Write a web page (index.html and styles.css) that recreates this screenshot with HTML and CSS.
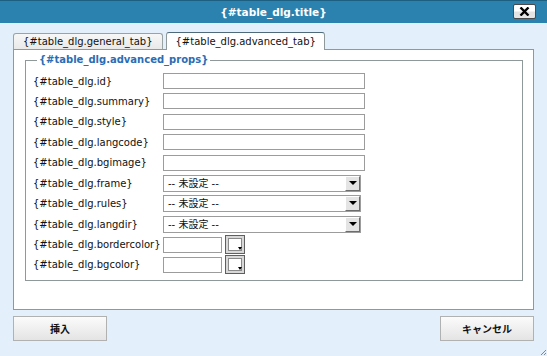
FILE: index.html
```html
<!DOCTYPE html>
<html lang="ja">
<head>
    <meta charset="UTF-8">
    <title>{#table_dlg.title}</title>
    <link rel="stylesheet" href="styles.css">
</head>
<body>
    <div class="dialog">
        <div class="titlebar">
            <span class="title">{#table_dlg.title}</span>
            <button class="close" type="button">
                <svg width="11" height="9" viewBox="0 0 11 9">
                    <path d="M1.5 0.5 L9.5 8.5 M9.5 0.5 L1.5 8.5" stroke="#000" stroke-width="2.4"/>
                </svg>
            </button>
        </div>
        <div class="tabs">
            <span class="tab">{#table_dlg.general_tab}</span>
            <span class="tab current">{#table_dlg.advanced_tab}</span>
        </div>
        <div class="panel">
            <fieldset class="props">
                <legend>{#table_dlg.advanced_props}</legend>
                <div class="form">
                    <label>{#table_dlg.id}</label>
                    <input type="text" class="text">
                    <label>{#table_dlg.summary}</label>
                    <input type="text" class="text">
                    <label>{#table_dlg.style}</label>
                    <input type="text" class="text">
                    <label>{#table_dlg.langcode}</label>
                    <input type="text" class="text">
                    <label>{#table_dlg.bgimage}</label>
                    <input type="text" class="text">
                    <label>{#table_dlg.frame}</label>
                    <div class="select"><select><option>-- 未設定 --</option></select><span class="arrow"></span></div>
                    <label>{#table_dlg.rules}</label>
                    <div class="select"><select><option>-- 未設定 --</option></select><span class="arrow"></span></div>
                    <label>{#table_dlg.langdir}</label>
                    <div class="select"><select><option>-- 未設定 --</option></select><span class="arrow"></span></div>
                    <label>{#table_dlg.bordercolor}</label>
                    <div class="color"><input type="text" class="text short"><span class="picker"><span class="swatch"></span></span></div>
                    <label>{#table_dlg.bgcolor}</label>
                    <div class="color"><input type="text" class="text short"><span class="picker"><span class="swatch"></span></span></div>
                </div>
            </fieldset>
        </div>
        <div class="buttons">
            <button type="button" class="btn">挿入</button>
            <button type="button" class="btn">キャンセル</button>
        </div>
        <svg class="grip" width="7" height="7" viewBox="0 0 7 7">
            <path d="M6 1 L1 6 M6 4 L4 6" stroke="#7a8a99" stroke-width="1"/>
        </svg>
    </div>
</body>
</html>
```

FILE: styles.css
```css
*{
    margin: 0;
    padding: 0;
    box-sizing: border-box;
}
body{
    width: 547px;
    height: 356px;
    overflow: hidden;
    font-family: "DejaVu Sans", "Noto Sans CJK JP", sans-serif;
    font-size: 10px;
    color: #111;
}
.dialog{
    position: relative;
    width: 547px;
    height: 356px;
    background: #e3f0fb;
}
.titlebar{
    height: 23px;
    background: #2b82ae;
    border-top: 1px solid #1d5f80;
    display: flex;
    align-items: center;
    justify-content: center;
    position: relative;
}
.title{
    color: #fff;
    font-weight: bold;
    font-size: 10.5px;
}
.close{
    position: absolute;
    right: 11px;
    top: 3px;
    width: 23px;
    height: 15px;
    border: 1px solid #4a4a4a;
    border-radius: 2px;
    background: linear-gradient(#ffffff, #ffffff 45%, #e2e2e2 55%, #e6e6e6);
    display: flex;
    align-items: center;
    justify-content: center;
}
.tabs{
    display: flex;
    align-items: flex-end;
    gap: 3px;
    margin: 8px 0 0 13px;
    height: 18px;
}
.tab{
    height: 16px;
    padding: 0 9px;
    line-height: 15px;
    border: 1px solid #9aa3a4;
    border-bottom: none;
    border-radius: 3px 3px 0 0;
    background: linear-gradient(#f7f7f7, #e9e9e9);
}
.tab.current{
    height: 18px;
    line-height: 17px;
    padding: 0 8px 0 9px;
    background: #fff;
    border-color: #8f999a;
    border-top-color: #4f6a7a;
    position: relative;
    top: 1px;
}
.panel{
    margin-left: 13px;
    width: 521px;
    height: 261px;
    background: #fff;
    border: 1px solid #8f999a;
    padding: 4px 10px 0 11px;
}
.props{
    border: 1px solid #8f999a;
    padding: 7px 0 7px 7px;
}
.props legend{
    color: #2b6db5;
    font-weight: bold;
    line-height: 12px;
    padding: 0 2px;
    margin-left: 4px;
}
.form{
    display: grid;
    grid-template-columns: 130px auto;
    grid-auto-rows: 16px;
    row-gap: 4.45px;
    align-items: center;
}
.form label{
    white-space: nowrap;
}
.text{
    width: 202px;
    height: 16px;
    border: 1px solid #9c9c9c;
    background: #fff;
    font: inherit;
}
.text.short{
    width: 59px;
}
.select{
    position: relative;
    width: 198px;
    height: 17px;
}
.select select{
    appearance: none;
    width: 100%;
    height: 17px;
    border: 1px solid #9c9c9c;
    background: #fff;
    font: inherit;
    color: #111;
    padding-left: 4px;
    border-radius: 0;
}
.arrow{
    position: absolute;
    right: 1px;
    top: 1px;
    width: 15px;
    height: 15px;
    background: #e4e4e4;
    border-top: 1px solid #fff;
    border-left: 1px solid #fff;
    border-right: 1px solid #6d6d6d;
    border-bottom: 1px solid #6d6d6d;
}
.arrow::after{
    content: "";
    position: absolute;
    left: 3px;
    top: 4px;
    border-left: 4px solid transparent;
    border-right: 4px solid transparent;
    border-top: 4px solid #000;
}
.color{
    display: flex;
    align-items: center;
    gap: 3px;
    height: 16px;
}
.picker{
    position: relative;
    width: 20px;
    height: 19px;
    border: 1px solid #5f5f5f;
    background: #d8d8d8;
    padding: 2px;
}
.swatch{
    display: block;
    width: 14px;
    height: 13px;
    background: #fff;
    border: 1px solid #8a8a8a;
}
.picker::after{
    content: "";
    position: absolute;
    right: 2px;
    bottom: 3px;
    border-left: 2px solid transparent;
    border-right: 2px solid transparent;
    border-top: 3px solid #000;
}
.buttons{
    display: flex;
    justify-content: space-between;
    margin: 6px 13px 0 13px;
}
.btn{
    width: 94px;
    height: 25px;
    border: 1px solid #b1b1b1;
    background: linear-gradient(#fbfbfb, #e4e4e4);
    font-family: "Noto Sans CJK JP", "DejaVu Sans", sans-serif;
    font-weight: bold;
    font-size: 10px;
    color: #111;
}
.grip{
    position: absolute;
    right: 0;
    bottom: 0;
}
```
